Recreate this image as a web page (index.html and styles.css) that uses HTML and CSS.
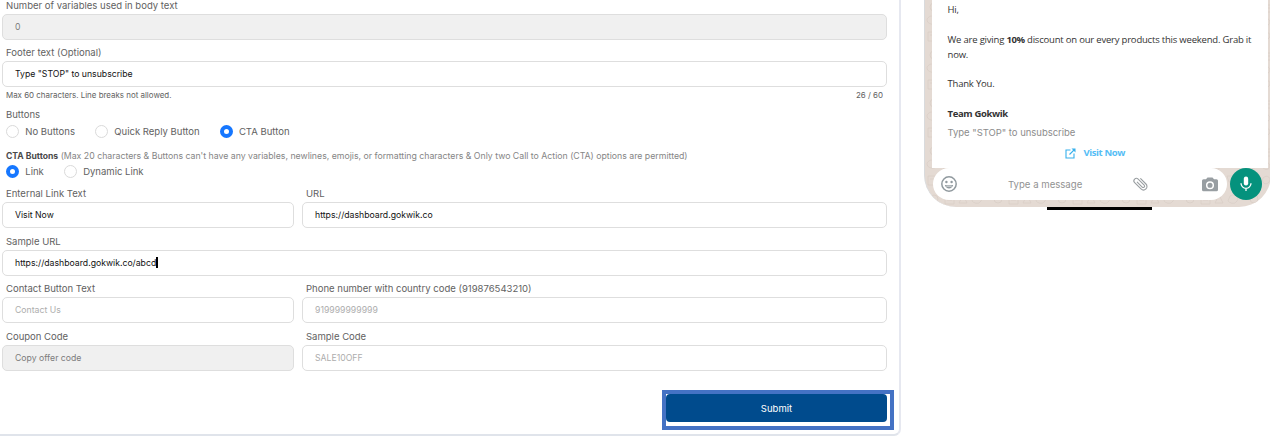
FILE: index.html
```html
<!DOCTYPE html>
<html lang="en">
<head>
    <meta charset="UTF-8">
    <meta name="viewport" content="width=device-width, initial-scale=1.0">
    <title>Create Template</title>
    <link rel="stylesheet" href="styles.css">
</head>
<body>
    <div class="page">
        <div class="form-card">
            <div class="field">
                <div class="label">Number of variables used in body text</div>
                <div class="input disabled"><span>0</span></div>
            </div>

            <div class="field footer-field">
                <div class="label">Footer text (Optional)</div>
                <div class="input"><span>Type "STOP" to unsubscribe</span></div>
            </div>
            <div class="hint">
                <span>Max 60 characters. Line breaks not allowed.</span>
                <span>26 / 60</span>
            </div>

            <div class="label buttons-label">Buttons</div>
            <div class="radios">
                <div class="radio"><i class="dot"></i><span>No Buttons</span></div>
                <div class="radio"><i class="dot"></i><span>Quick Reply Button</span></div>
                <div class="radio"><i class="dot checked"></i><span>CTA Button</span></div>
            </div>

            <div class="cta-note"><b>CTA Buttons</b> <span>(Max 20 characters &amp; Buttons can't have any variables, newlines, emojis, or formatting characters &amp; Only two Call to Action (CTA) options are permitted)</span></div>
            <div class="radios link-radios">
                <div class="radio"><i class="dot checked"></i><span>Link</span></div>
                <div class="radio"><i class="dot"></i><span>Dynamic Link</span></div>
            </div>

            <div class="row">
                <div class="field">
                    <div class="label">Enternal Link Text</div>
                    <div class="input"><span>Visit Now</span></div>
                </div>
                <div class="field">
                    <div class="label">URL</div>
                    <div class="input"><span>https://dashboard.gokwik.co</span></div>
                </div>
            </div>
            <div class="field">
                <div class="label">Sample URL</div>
                <div class="input"><span>https://dashboard.gokwik.co/abcd</span><i class="caret"></i></div>
            </div>
            <div class="row">
                <div class="field">
                    <div class="label">Contact Button Text</div>
                    <div class="input placeholder"><span>Contact Us</span></div>
                </div>
                <div class="field">
                    <div class="label">Phone number with country code (919876543210)</div>
                    <div class="input placeholder"><span>919999999999</span></div>
                </div>
            </div>
            <div class="row">
                <div class="field">
                    <div class="label">Coupon Code</div>
                    <div class="input disabled"><span>Copy offer code</span></div>
                </div>
                <div class="field">
                    <div class="label">Sample Code</div>
                    <div class="input placeholder"><span>SALE10OFF</span></div>
                </div>
            </div>

            <div class="submit-frame">
                <div class="submit">Submit</div>
            </div>
        </div>

        <div class="preview">
            <div class="phone">
                <svg class="doodles" width="347" height="207">
                    <defs>
                        <pattern id="doodle" width="64" height="48" patternUnits="userSpaceOnUse">
                            <g fill="none" stroke="#d9cec6" stroke-width="0.8">
                                <circle cx="9" cy="7" r="4"/>
                                <path d="M2 19c3-4 6-4 9 0s-2 6-5 5-4-2-4-5zM20 5h9v7h-9zM22 8h5M34 11l4-8 4 8zM49 4c5-3 10 1 7 5s-7 2-9 0z"/>
                                <path d="M17 22c2-5 8-4 8 0s-6 5-8 0zM31 18h7v7h-7M44 20l4 4 4-5 5 5M3 32h8v9H3zM5 35h4M18 34c4-4 9 0 6 4s-8 1-6-4zM32 33l3 6 5-6M46 32h10l-2 6h-6z"/>
                                <circle cx="38" cy="44" r="3"/>
                                <circle cx="60" cy="43" r="3"/>
                            </g>
                        </pattern>
                    </defs>
                    <rect width="347" height="207" fill="url(#doodle)"/>
                </svg>
                <div class="message">
                    <p>Hi,</p>
                    <p>We are giving <b>10%</b> discount on our every products this weekend. Grab it<br>now.</p>
                    <p>Thank You.</p>
                    <p class="line-team"><b>Team Gokwik</b></p>
                    <p class="message-footer">Type "STOP" to unsubscribe</p>
                    <div class="visit">
                        <svg width="11" height="11" viewBox="0 0 11 11" fill="none" stroke="#36b0ec" stroke-width="1.1">
                            <path d="M5.500 2H1v8h8V5.500M4.500 6.500l5-5"/>
                            <path d="M6.500.5h4v4z" fill="#36b0ec" stroke="none"/>
                        </svg>
                        <span>Visit Now</span>
                    </div>
                </div>
                <div class="composer">
                    <div class="composer-box">
                        <svg width="18" height="18" viewBox="0 0 18 18">
                            <circle cx="9" cy="9" r="7.200" fill="none" stroke="#919a9f" stroke-width="1.500"/>
                            <circle cx="6.400" cy="7" r="1.200" fill="#919a9f"/>
                            <circle cx="11.600" cy="7" r="1.200" fill="#919a9f"/>
                            <path d="M4.800 10h8.400c-.7 2.200-2.200 3.400-4.200 3.400S5.500 12.200 4.800 10z" fill="#919a9f"/>
                            <path d="M6.300 11.100h5.400" stroke="#fff" stroke-width=".8"/>
                        </svg>
                        <span class="composer-text">Type a message</span>
                        <svg width="18" height="18" viewBox="0 0 18 18" fill="none" stroke="#9a9fa2" stroke-width="1.100" stroke-linecap="round">
                            <g transform="rotate(-45 9 9)">
                                <path d="M12.500 5v7.500a3.500 3.500 0 0 1-7 0V3.500a2.500 2.500 0 0 1 5 0v8.500a1.400 1.400 0 0 1-2.800 0V5"/>
                            </g>
                        </svg>
                        <svg class="camera" width="16" height="15" viewBox="0 0 16 15">
                            <path d="M5.500.5h5L12 2.300h2.500A1.500 1.500 0 0 1 16 3.800v9a1.500 1.500 0 0 1-1.500 1.500h-13A1.500 1.500 0 0 1 0 12.800v-9a1.500 1.500 0 0 1 1.500-1.500H4z" fill="#989ea2"/>
                            <circle cx="8" cy="8.200" r="3.300" fill="none" stroke="#fff" stroke-width="1.500"/>
                        </svg>
                    </div>
                    <div class="mic">
                        <svg width="12" height="16" viewBox="0 0 12 16">
                            <rect x="3.800" y="0.500" width="4.400" height="9" rx="2.200" fill="#fff"/>
                            <path d="M1 7.300a5 5 0 0 0 10 0M6 12.300V15" fill="none" stroke="#fff" stroke-width="1.300"/>
                        </svg>
                    </div>
                </div>
            </div>
            <div class="home-bar"></div>
        </div>
    </div>
</body>
</html>
```

FILE: styles.css
```css
* {
    margin: 0;
    padding: 0;
    box-sizing: border-box;
}

body {
    font-family: Inter, sans-serif;
    background: #fff;
    color: #626262;
    overflow: hidden;
}

.page {
    display: flex;
    width: 1270px;
    height: 444px;
    overflow: hidden;
}

/* form */
.form-card {
    flex: none;
    width: 901px;
    height: 436px;
    padding: 0 12px 0 2px;
    border-right: 2px solid #e6e8f0;
    border-bottom: 2px solid #e0e4eb;
    border-bottom-right-radius: 7px;
}

.field {
    height: 47.5px;
}

.footer-field {
    height: 48px;
    margin-top: -0.5px;
}

.label {
    height: 14px;
    padding-left: 4px;
    font-size: 9.53px;
    line-height: 11px;
    white-space: nowrap;
}

.input {
    display: flex;
    align-items: center;
    height: 26px;
    padding-left: 12px;
    border: 1px solid #dedede;
    border-radius: 5px;
    font-size: 8.7px;
    color: #111;
    white-space: nowrap;
}

.disabled {
    background: #f0f0f0;
    color: #7c7c7c;
}

.placeholder {
    color: #adadad;
}

.hint {
    display: flex;
    justify-content: space-between;
    height: 14px;
    margin-top: -6px;
    padding: 0 4px;
    font-size: 7.93px;
    line-height: 12px;
}

.buttons-label {
    margin-top: 6px;
}

.radios {
    display: flex;
    height: 13px;
    margin-top: 2px;
    padding-left: 4px;
    gap: 20px;
}

.radio {
    display: flex;
    align-items: center;
    gap: 6.3px;
    font-size: 9.53px;
    white-space: nowrap;
}

.dot {
    width: 13px;
    height: 13px;
    border: 1px solid #dadada;
    border-radius: 50%;
}

.checked {
    border: 4px solid #1677ff;
}

.cta-note {
    height: 12px;
    margin-top: 12px;
    padding-left: 4px;
    font-size: 8.74px;
    line-height: 12px;
    color: #858585;
    white-space: nowrap;
}

.cta-note b {
    font-size: 8.6px;
    color: #4a4a4a;
}

.link-radios {
    margin-top: 3px;
    margin-bottom: 10px;
}

.row {
    display: grid;
    grid-template-columns: 292px 585px;
    gap: 8px;
}

.caret {
    width: 1.5px;
    height: 11px;
    background: #000;
}

.submit-frame {
    width: 232px;
    height: 40px;
    margin: 12px 0 0 660px;
    padding: 0 3px 4px 0;
    border: 4px solid #4472c4;
}

.submit {
    height: 28px;
    border-radius: 4px;
    background: #004b8d;
    color: #fff;
    font-size: 9.5px;
    line-height: 29px;
    text-align: center;
}

/* whatsapp preview */
.preview {
    flex: none;
    width: 347px;
    margin-left: 23px;
}

.phone {
    position: relative;
    width: 347px;
    height: 207px;
    padding-left: 7px;
    border-left: 1px solid #d9dbdd;
    border-radius: 0 0 32px 32px;
    background: #e4dad3;
    overflow: hidden;
}

.doodles {
    position: absolute;
    top: 0;
    left: 0;
}

.message {
    position: relative;
    width: 336px;
    height: 168px;
    padding: 3px 0 0 15.5px;
    background: #fff;
    font-family: "Open Sans", sans-serif;
    font-size: 9.5px;
    line-height: 14.9px;
    letter-spacing: -0.2px;
    color: #333;
    white-space: nowrap;
}

.message p {
    margin-bottom: 14.8px;
}

.message b {
    letter-spacing: -0.35px;
}

.message .line-team {
    margin-bottom: 3.8px;
}

.message .message-footer {
    margin-bottom: 5.5px;
    font-family: Inter, sans-serif;
    letter-spacing: -0.03px;
    color: #8c8c8c;
}

.visit {
    display: flex;
    align-items: center;
    gap: 8px;
    height: 15px;
    padding-left: 117px;
    font-weight: 700;
    letter-spacing: -0.4px;
    color: #55bdf5;
}

.composer {
    position: relative;
    display: flex;
    align-items: center;
    gap: 3px;
    height: 32px;
    padding-left: 1px;
}

.composer-box {
    display: flex;
    align-items: center;
    width: 294px;
    height: 32px;
    padding-left: 7px;
    border-radius: 16px;
    background: #fff;
}

.composer-text {
    width: 124px;
    margin-left: 50px;
    font-size: 9.6px;
    color: #929292;
}

.camera {
    margin-left: 52px;
}

.mic {
    display: flex;
    align-items: center;
    justify-content: center;
    width: 32px;
    height: 32px;
    border-radius: 50%;
    background: #05927d;
}

.home-bar {
    width: 105px;
    height: 3px;
    margin-left: 123px;
    background: #000;
}
```
